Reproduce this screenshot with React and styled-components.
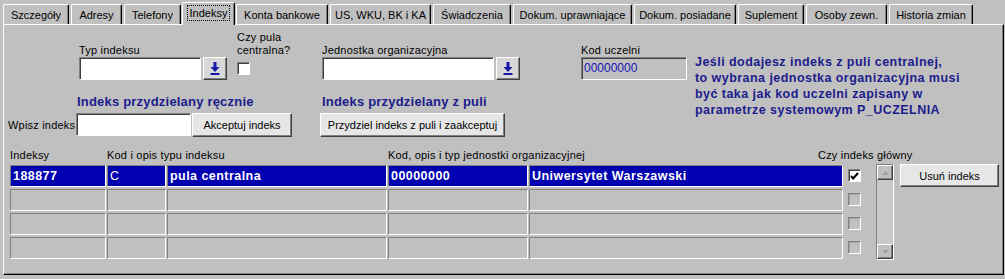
import React from "react";
import styled, { createGlobalStyle } from "styled-components";

const GlobalStyle = createGlobalStyle`
  html, body {
    margin: 0;
    padding: 0;
    background: #c0c0c0;
  }
  body {
    font-family: "Liberation Sans", Arial, sans-serif;
    font-size: 11px;
    color: #000;
  }
`;

const Screen = styled.div`
  width: 1005px;
  height: 279px;
  padding: 2px 1px 0 3px;
  box-sizing: border-box;
  background: #c0c0c0;
  overflow: hidden;
`;

const TabBar = styled.div`
  display: flex;
  align-items: flex-end;
  gap: 2px;
  height: 22px;
`;

const Tab = styled.div`
  box-sizing: border-box;
  width: ${(p) => p.$w}px;
  height: ${(p) => (p.$active ? 23 : 20)}px;
  margin: ${(p) => (p.$active ? "0 -1px -1px" : "0")};
  display: flex;
  align-items: center;
  justify-content: center;
  border-top: 1px solid #fff;
  border-left: 1px solid #fff;
  border-right: 1px solid #000;
  box-shadow: inset -1px 0 0 #808080;
  border-radius: 2px 2px 0 0;
  background: #c0c0c0;
  position: relative;
  z-index: ${(p) => (p.$active ? 2 : 1)};
  padding-bottom: ${(p) => (p.$active ? 2 : 0)}px;
  white-space: nowrap;
`;

const FocusText = styled.span`
  outline: 1px dotted #000;
  outline-offset: 1px;
  padding: 0 1px;
`;

const Panel = styled.div`
  box-sizing: border-box;
  height: 251px;
  border-top: 1px solid #fff;
  border-left: 1px solid #fff;
  border-right: 1px solid #000;
  border-bottom: 1px solid #000;
  box-shadow: inset -1px -1px 0 #808080;
  padding: 6px 4px 0 4px;
  position: relative;
  z-index: 1;
`;

const TopArea = styled.div`
  display: flex;
`;

const LeftCol = styled.div`
  width: 679px;
`;

const FieldRow = styled.div`
  display: flex;
  align-items: flex-end;
`;

const Field = styled.div`
  display: flex;
  flex-direction: column;
  margin-left: ${(p) => p.$ml || 0}px;
  width: ${(p) => (p.$w ? `${p.$w}px` : "auto")};
  height: ${(p) => (p.$h ? `${p.$h}px` : "auto")};
`;

const Label = styled.div`
  line-height: 13px;
  letter-spacing: 0.2px;
  white-space: nowrap;
`;

const InputLine = styled.div`
  display: flex;
  gap: 2px;
`;

const TextBox = styled.div`
  box-sizing: border-box;
  width: ${(p) => p.$w}px;
  height: 23px;
  background: ${(p) => (p.$readOnly ? "#c0c0c0" : "#fff")};
  border-top: 1px solid #808080;
  border-left: 1px solid #808080;
  border-right: 1px solid #fff;
  border-bottom: 1px solid #fff;
  box-shadow: inset 1px 1px 0 #404040;
  color: #1414b4;
  font-size: 12px;
  line-height: 21px;
  padding-left: 2px;
`;

const LovButton = styled.div`
  box-sizing: border-box;
  width: 24px;
  height: 23px;
  background: #d8d8d8;
  border-top: 1px solid #fff;
  border-left: 1px solid #fff;
  border-right: 1px solid #404040;
  border-bottom: 1px solid #404040;
  box-shadow: inset -1px -1px 0 #808080;
  display: flex;
  align-items: center;
  justify-content: center;
`;

const Check = styled.div`
  box-sizing: border-box;
  width: 13px;
  height: 13px;
  background: ${(p) => (p.$disabled ? "#c0c0c0" : "#fff")};
  border-top: 1px solid #808080;
  border-left: 1px solid #808080;
  border-right: 1px solid #fff;
  border-bottom: 1px solid #fff;
  box-shadow: ${(p) => (p.$disabled ? "inset 1px 1px 0 #a8a8a8" : "inset 1px 1px 0 #404040")};
  margin-top: ${(p) => p.$mt || 0}px;
  display: flex;
  align-items: center;
  justify-content: center;
`;

const ActionRow = styled.div`
  display: flex;
  margin-top: 14px;
`;

const Section = styled.div`
  display: grid;
  grid-template-columns: ${(p) => p.$labelW}px auto;
  align-items: center;
  margin-left: ${(p) => p.$ml || 0}px;
`;

const Heading = styled.div`
  grid-column: 2;
  color: #1c1c8c;
  font-weight: bold;
  font-size: 13px;
  letter-spacing: 0.2px;
  line-height: 16px;
  margin-bottom: 3px;
  padding-left: ${(p) => p.$pl || 1}px;
  white-space: nowrap;
`;

const Controls = styled.div`
  grid-column: 2;
  display: flex;
  align-items: flex-start;
`;

const Button = styled.div`
  box-sizing: border-box;
  width: ${(p) => p.$w}px;
  height: ${(p) => p.$h || 24}px;
  margin-top: ${(p) => p.$mt || 0}px;
  margin-left: ${(p) => p.$ml || 0}px;
  background: #e6e6e6;
  border-top: 1px solid #fff;
  border-left: 1px solid #fff;
  border-right: 1px solid #404040;
  border-bottom: 1px solid #404040;
  box-shadow: inset -1px -1px 0 #808080;
  display: flex;
  align-items: center;
  justify-content: center;
  font-size: 11px;
  white-space: nowrap;
  flex-shrink: 0;
`;

const Info = styled.div`
  margin: 23px 0 0 8px;
  color: #1c1c8c;
  font-weight: bold;
  font-size: 12.5px;
  letter-spacing: 0.45px;
  line-height: 16px;
  white-space: nowrap;
`;

const HeaderRow = styled.div`
  display: flex;
  margin: 12px 0 0 2px;
  line-height: 13px;
  letter-spacing: 0.2px;
`;

const ColHead = styled.div`
  width: ${(p) => (p.$w ? `${p.$w}px` : "auto")};
  white-space: nowrap;
`;

const TableArea = styled.div`
  display: flex;
  align-items: flex-start;
  margin: 3px 0 0 2px;
`;

const Table = styled.div`
  display: grid;
  grid-template-columns: 96px 59px 220px 140px 314px;
  grid-auto-rows: 22px;
  column-gap: 1px;
  row-gap: 2px;
`;

const Cell = styled.div`
  box-sizing: border-box;
  background: ${(p) => (p.$selected ? "#0000b0" : "#c0c0c0")};
  color: #fff;
  border-top: 1px solid #808080;
  border-left: 1px solid #808080;
  border-right: 1px solid #fff;
  border-bottom: 1px solid #fff;
  font-size: 12.5px;
  letter-spacing: 0.45px;
  font-weight: ${(p) => (p.$bold ? "bold" : "normal")};
  line-height: 20px;
  padding-left: 2px;
  white-space: nowrap;
  overflow: hidden;
`;

const CheckCol = styled.div`
  display: flex;
  flex-direction: column;
  gap: 11px;
  padding-top: 4px;
  margin-left: 5px;
`;

const ScrollBar = styled.div`
  box-sizing: border-box;
  width: 18px;
  height: 96px;
  margin: -1px 0 0 15px;
  border-top: 1px solid #808080;
  border-left: 1px solid #808080;
  border-right: 1px solid #fff;
  border-bottom: 1px solid #fff;
  background: #c8c8c8;
  display: flex;
  flex-direction: column;
  justify-content: space-between;
`;

const ScrollBtn = styled.div`
  box-sizing: border-box;
  height: 15px;
  background: #c0c0c0;
  border-top: 1px solid #fff;
  border-left: 1px solid #fff;
  border-right: 1px solid #404040;
  border-bottom: 1px solid #404040;
  box-shadow: inset -1px -1px 0 #808080;
  display: flex;
  align-items: center;
  justify-content: center;
`;

const DownArrowIcon = () => (
  <svg width="10" height="13" viewBox="0 0 10 13">
    <rect x="3.5" y="0" width="3" height="6" fill="#1818a8" />
    <polygon points="0.5,5 9.5,5 5,10" fill="#1818a8" />
    <rect x="0.5" y="11" width="9" height="2" fill="#1818a8" />
  </svg>
);

const Tri = ({ up }) => (
  <svg width="7" height="4" viewBox="0 0 7 4">
    <polygon points={up ? "0,4 7,4 3.5,0" : "0,0 7,0 3.5,4"} fill="#a0a0a0" />
  </svg>
);

const CheckMark = () => (
  <svg width="9" height="8" viewBox="0 0 9 8">
    <path d="M1 4 L3.2 6.5 L8 1" stroke="#000" strokeWidth="2" fill="none" />
  </svg>
);

const tabs = [
  ["Szczegóły", 66],
  ["Adresy", 51],
  ["Telefony", 57],
  ["Indeksy", 53],
  ["Konta bankowe", 92],
  ["US, WKU, BK i KA", 101],
  ["Świadczenia", 78],
  ["Dokum. uprawniające", 119],
  ["Dokum. posiadane", 102],
  ["Suplement", 66],
  ["Osoby zewn.", 81],
  ["Historia zmian", 84],
];

const rows = [
  ["188877", "C", "pula centralna", "00000000", "Uniwersytet Warszawski"],
  ["", "", "", "", ""],
  ["", "", "", "", ""],
  ["", "", "", "", ""],
];

const App = () => {
  return (
    <>
      <GlobalStyle />
      <Screen>
        <TabBar>
          {tabs.map(([name, w]) => (
            <Tab key={name} $w={w} $active={name === "Indeksy"}>
              {name === "Indeksy" ? <FocusText>{name}</FocusText> : name}
            </Tab>
          ))}
        </TabBar>
        <Panel>
          <TopArea>
            <LeftCol>
              <FieldRow>
                <Field $ml={71}>
                  <Label>Typ indeksu</Label>
                  <InputLine>
                    <TextBox $w={122} />
                    <LovButton>
                      <DownArrowIcon />
                    </LovButton>
                  </InputLine>
                </Field>
                <Field $ml={10} $w={85} $h={49}>
                  <Label>Czy pula</Label>
                  <Label>centralna?</Label>
                  <Check $mt={5} />
                </Field>
                <Field>
                  <Label>Jednostka organizacyjna</Label>
                  <InputLine>
                    <TextBox $w={172} />
                    <LovButton>
                      <DownArrowIcon />
                    </LovButton>
                  </InputLine>
                </Field>
                <Field $ml={61}>
                  <Label>Kod uczelni</Label>
                  <TextBox $w={106} $readOnly>
                    00000000
                  </TextBox>
                </Field>
              </FieldRow>
              <ActionRow>
                <Section $labelW={68}>
                  <Heading>Indeks przydzielany ręcznie</Heading>
                  <Label style={{ gridColumn: 1, gridRow: 2 }}>Wpisz indeks</Label>
                  <Controls>
                    <TextBox $w={115} />
                    <Button $w={100} $ml={1}>
                      Akceptuj indeks
                    </Button>
                  </Controls>
                </Section>
                <Section $labelW={0} $ml={28}>
                  <Heading $pl={2}>Indeks przydzielany z puli</Heading>
                  <Controls>
                    <Button $w={185}>Przydziel indeks z puli i zaakceptuj</Button>
                  </Controls>
                </Section>
              </ActionRow>
            </LeftCol>
            <Info>
              Jeśli dodajesz indeks z puli centralnej,
              <br />
              to wybrana jednostka organizacyjna musi
              <br />
              być taka jak kod uczelni zapisany w
              <br />
              parametrze systemowym P_UCZELNIA
            </Info>
          </TopArea>
          <HeaderRow>
            <ColHead $w={97}>Indeksy</ColHead>
            <ColHead $w={281}>Kod i opis typu indeksu</ColHead>
            <ColHead $w={430}>Kod, opis i typ jednostki organizacyjnej</ColHead>
            <ColHead>Czy indeks główny</ColHead>
          </HeaderRow>
          <TableArea>
            <Table>
              {rows.map((r, i) =>
                r.map((v, j) => (
                  <Cell key={`${i}-${j}`} $selected={i === 0} $bold={j !== 1}>
                    {v}
                  </Cell>
                ))
              )}
            </Table>
            <CheckCol>
              <Check>
                <CheckMark />
              </Check>
              <Check $disabled />
              <Check $disabled />
              <Check $disabled />
            </CheckCol>
            <ScrollBar>
              <ScrollBtn>
                <Tri up />
              </ScrollBtn>
              <ScrollBtn>
                <Tri />
              </ScrollBtn>
            </ScrollBar>
            <Button $w={99} $h={23} $mt={-1} $ml={6}>
              Usuń indeks
            </Button>
          </TableArea>
        </Panel>
      </Screen>
    </>
  );
};

export default App;
